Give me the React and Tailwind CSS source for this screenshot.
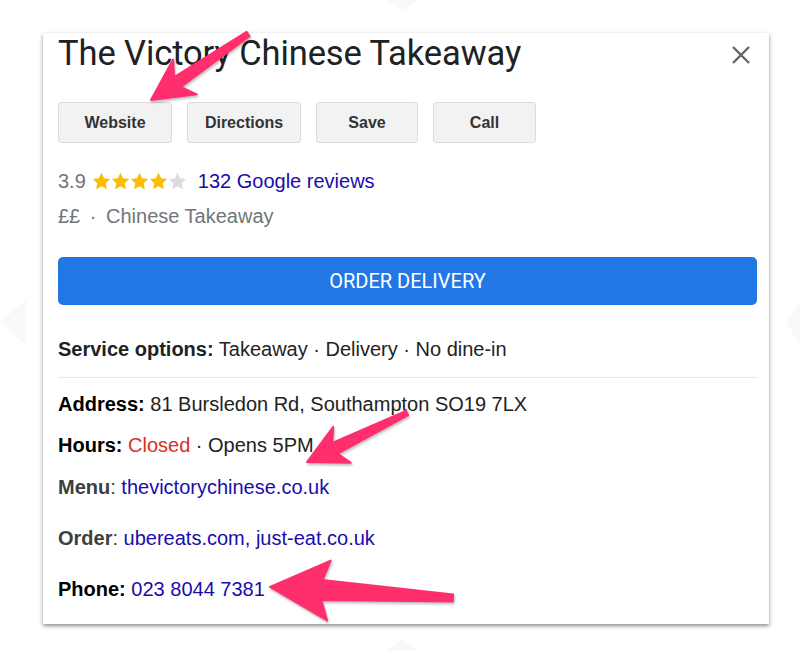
import React from 'react';

const sans = 'font-["Liberation_Sans",Arial,sans-serif]';

// tapered "skitch" arrows drawn over the card
const ARROWS = [
  { tail: [248, 34], tip: [151, 100], headLen: 41, headHalf: 21, joinLen: 32, near: 6, far: 2.5 },
  { tail: [407, 413], tip: [307, 462], headLen: 39, headHalf: 20, joinLen: 31, near: 6, far: 2.5 },
  { tail: [453, 598], tip: [270, 587], headLen: 59, headHalf: 30, joinLen: 52, near: 10, far: 3.5 },
];

function arrowPoints({ tail, tip, headLen, headHalf, joinLen, near, far }) {
  const dx = tip[0] - tail[0];
  const dy = tip[1] - tail[1];
  const len = Math.hypot(dx, dy);
  const d = [dx / len, dy / len];
  const n = [-d[1], d[0]];
  const at = (base, back, side) => [base[0] - d[0] * back + n[0] * side, base[1] - d[1] * back + n[1] * side];
  const pts = [
    tip,
    at(tip, headLen, headHalf),
    at(tip, joinLen, near),
    at(tail, 0, far),
    at(tail, 0, -far),
    at(tip, joinLen, -near),
    at(tip, headLen, -headHalf),
  ];
  return pts.map((p) => p[0].toFixed(1) + ',' + p[1].toFixed(1)).join(' ');
}

function Star({ filled }) {
  return (
    <svg width="19" height="19" viewBox="0 0 24 24">
      <path
        d="M12 1l3.3 7 7.6.9-5.6 5.2 1.5 7.6L12 17.9l-6.8 3.8 1.5-7.6L1.1 8.9l7.6-.9z"
        fill={filled ? '#fbbc04' : '#dadce0'}
      />
    </svg>
  );
}

function ActionButton({ label, width }) {
  return (
    <button
      className={`h-[41px] ${width} rounded-[3px] border border-[#dcdcdc] bg-[#f2f2f2] text-[16px] font-bold text-[#333] ${sans}`}
    >
      {label}
    </button>
  );
}

export default function App() {
  return (
    <div className="relative h-[651px] w-[800px] overflow-hidden bg-white">
      {/* faint map controls peeking round the card */}
      <svg className="absolute left-0 top-0" width="800" height="651">
        <polygon points="385,0 420,0 402,10" fill="#f9f9f9" />
        <polygon points="0,322 26,300 26,345" fill="#f9f9f9" />
        <polygon points="800,300 786,322 800,345" fill="#f9f9f9" />
        <polygon points="385,651 420,651 402,640" fill="#f9f9f9" />
      </svg>

      <div className="pl-[43px] pt-[33px]">
        <div className="relative h-[591px] w-[726px] bg-white pl-[15px] pr-[12px] shadow-[0_2px_4px_rgba(0,0,0,0.45)]">
          <div className="flex h-[40px] items-center justify-between">
            <h1 className='font-["Roboto",sans-serif] text-[34.5px] leading-[40px] tracking-[-0.1px] text-[#202124]'>
              The Victory Chinese Takeaway
            </h1>
            <svg width="20" height="20" viewBox="0 0 20 20" className="mr-[6px] mt-[4px]">
              <path d="M2 2L18 18M18 2L2 18" stroke="#666" strokeWidth="2.4" />
            </svg>
          </div>

          <div className="mt-[29px] flex gap-[15px]">
            <ActionButton label="Website" width="w-[114px]" />
            <ActionButton label="Directions" width="w-[114px]" />
            <ActionButton label="Save" width="w-[102px]" />
            <ActionButton label="Call" width="w-[103px]" />
          </div>

          <div className={`mt-[26px] flex h-[24px] items-center text-[20px] ${sans}`}>
            <span className="text-[#70757a]">3.9</span>
            <span className="ml-[6px] mr-[11px] flex">
              <Star filled />
              <Star filled />
              <Star filled />
              <Star filled />
              <Star />
            </span>
            <span className="text-[#1a0dab]">132 Google reviews</span>
          </div>

          <div className={`mt-[11px] h-[24px] text-[20px] leading-[24px] text-[#70757a] ${sans}`}>
            ££ <span className="mx-[4px]">·</span> Chinese Takeaway
          </div>

          <button className='mt-[29px] flex h-[48px] w-full items-center justify-center rounded-[5px] bg-[#2377e4] font-["Roboto",sans-serif] text-[20px] text-white'>
            ORDER DELIVERY
          </button>

          <div className={`mt-[32px] h-[24px] text-[20px] leading-[24px] text-[#222] ${sans}`}>
            <span className="font-bold">Service options:</span> Takeaway · Delivery · No dine-in
          </div>

          <div className="mt-[16px] h-px bg-[#e6e6e6]" />

          <div className={`text-[20px] leading-[24px] text-[#222] ${sans}`}>
            <div className="mt-[14px]">
              <span className="font-bold text-black">Address:</span> 81 Bursledon Rd, Southampton SO19 7LX
            </div>
            <div className="mt-[17px]">
              <span className="font-bold text-black">Hours:</span> <span className="text-[#d93025]">Closed</span> · Opens 5PM
            </div>
            <div className="mt-[18px]">
              <span className="font-bold text-[#3c4043]">Menu</span>
              <span className="text-[#3c4043]">: </span>
              <span className="text-[#1a0dab]">thevictorychinese.co.uk</span>
            </div>
            <div className="mt-[27px]">
              <span className="font-bold text-[#3c4043]">Order</span>
              <span className="text-[#3c4043]">: </span>
              <span className="text-[#1a0dab]">ubereats.com, just-eat.co.uk</span>
            </div>
            <div className="mt-[27px]">
              <span className="font-bold text-black">Phone:</span> <span className="text-[#1a0dab]">023 8044 7381</span>
            </div>
          </div>
        </div>
      </div>

      <svg className="pointer-events-none absolute left-0 top-0 drop-shadow-[1px_2px_1px_rgba(0,0,0,0.25)]" width="800" height="651">
        {ARROWS.map((a, i) => (
          <polygon key={i} points={arrowPoints(a)} fill="#ff2e6d" stroke="#ff2e6d" strokeWidth="2" strokeLinejoin="round" />
        ))}
      </svg>
    </div>
  );
}
